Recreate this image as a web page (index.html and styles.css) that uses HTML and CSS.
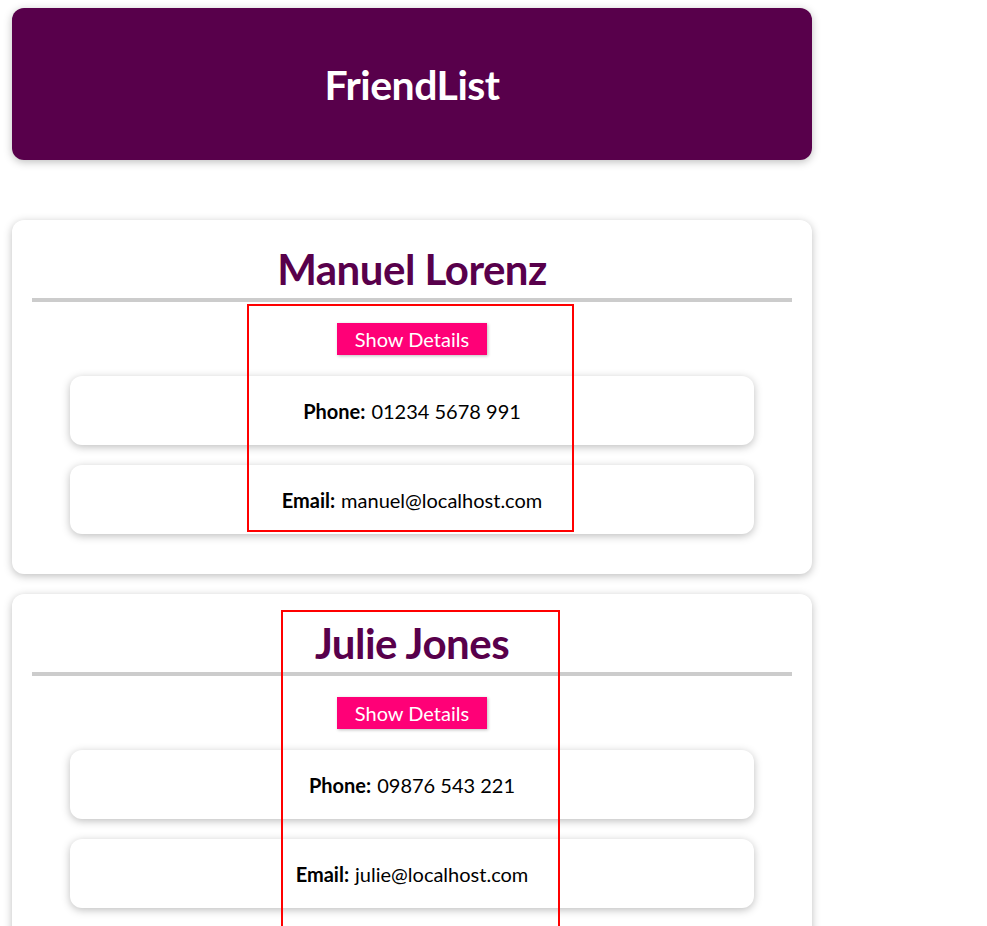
FILE: index.html
```html
<!DOCTYPE html>
<html lang="en">
<head>
  <meta charset="UTF-8" />
  <meta name="viewport" content="width=device-width, initial-scale=1.0" />
  <title>FriendList</title>
  <link rel="stylesheet" href="styles.css">
</head>
<body>
  <div class="app">
    <header class="header">
      <h1>FriendList</h1>
    </header>

    <ul class="friends">
      <li class="friend">
        <h2>Manuel Lorenz</h2>
        <hr>
        <button class="toggle">Show Details</button>
        <ul class="details">
          <li class="detail"><strong>Phone:</strong> 01234 5678 991</li>
          <li class="detail"><strong>Email:</strong> manuel@localhost.com</li>
        </ul>
        <div class="outline outline-one"></div>
      </li>
      <li class="friend">
        <h2>Julie Jones</h2>
        <hr>
        <button class="toggle">Show Details</button>
        <ul class="details">
          <li class="detail"><strong>Phone:</strong> 09876 543 221</li>
          <li class="detail"><strong>Email:</strong> julie@localhost.com</li>
        </ul>
        <div class="outline outline-two"></div>
      </li>
    </ul>
  </div>
</body>
</html>
```

FILE: styles.css
```css
* {
  box-sizing: border-box;
}
html, body {
  margin: 0;
  height: 926px;
  overflow: hidden;
}
body {
  font-family: Lato, "Open Sans", sans-serif;
  background: #fff;
  color: #000;
}
.app {
  width: 824px;
  padding: 8px 12px;
}
.header {
  height: 152px;
  background: #58004b;
  border-radius: 12px;
  box-shadow: 0 2px 8px rgba(0, 0, 0, 0.26);
  display: flex;
  align-items: center;
  justify-content: center;
}
.header h1 {
  margin: 0;
  color: #fff;
  font-size: 41px;
  font-weight: 700;
  letter-spacing: -0.5px;
}
.friends {
  list-style: none;
  margin: 60px 0 0;
  padding: 0;
  display: flex;
  flex-direction: column;
  gap: 20px;
}
.friend {
  position: relative;
  background: #fff;
  border-radius: 12px;
  box-shadow: 0 2px 8px rgba(0, 0, 0, 0.26);
  padding: 28px 20px 40px;
  text-align: center;
}
.friend h2 {
  margin: 0 0 8px;
  color: #58004b;
  font-size: 42px;
  line-height: 1;
  font-weight: 700;
  letter-spacing: -0.5px;
}
.friend hr {
  border: none;
  height: 4px;
  margin: 0;
  background: #ccc;
}
.toggle {
  margin-top: 21px;
  height: 32px;
  padding: 0 18px;
  font-family: inherit;
  font-size: 20px;
  color: #fff;
  background: #ff0077;
  border: none;
  box-shadow: 1px 1px 3px rgba(0, 0, 0, 0.26);
  cursor: pointer;
}
.details {
  list-style: none;
  margin: 21px 18px 0;
  padding: 0 20px;
  display: flex;
  flex-direction: column;
  gap: 20px;
}
.detail {
  height: 69px;
  display: flex;
  align-items: center;
  justify-content: center;
  gap: 6px;
  font-size: 20px;
  border-radius: 12px;
  box-shadow: 0 2px 8px rgba(0, 0, 0, 0.26);
}
.outline {
  position: absolute;
  border: 2px solid #f00;
  pointer-events: none;
}
.outline-one {
  left: 235px;
  top: 84px;
  width: 327px;
  height: 228px;
}
.outline-two {
  left: 269px;
  top: 16px;
  width: 279px;
  height: 360px;
}
```
